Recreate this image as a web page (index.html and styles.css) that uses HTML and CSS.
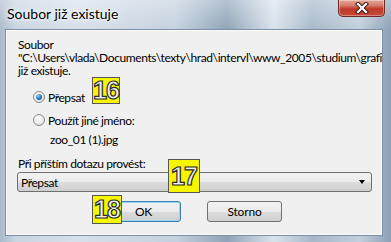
FILE: index.html
```html
<!DOCTYPE html>
<html>
<head>
    <title>Soubor již existuje</title>
    <link rel="stylesheet" href="styles.css">
</head>
<body>
    <div class="window">
        <div class="titlebar">
            <span class="title">Soubor již existuje</span>
            <div class="close">
                <svg width="16" height="12" viewBox="0 0 16 12">
                    <path d="M4 2 L12 10 M12 2 L4 10" stroke="#3a1c18" stroke-width="4.2" stroke-linecap="square"/>
                    <path d="M4 2 L12 10 M12 2 L4 10" stroke="#ffffff" stroke-width="2.2" stroke-linecap="square"/>
                </svg>
            </div>
        </div>
        <div class="client">
            <p class="msg">Soubor<br>"C:\Users\vlada\Documents\texty\hrad\intervl\www_2005\studium\grafika\zoo_01.jpg"<br>již existuje.</p>
            <div class="options">
                <div class="radio checked"><span class="dot"></span>Přepsat</div>
                <div class="radio"><span class="dot"></span>Použít jiné jméno:</div>
                <div class="filename">zoo_01 (1).jpg</div>
            </div>
            <div class="next">Při příštím dotazu provést:</div>
            <div class="select">
                <span>Přepsat</span>
                <span class="arrow"></span>
            </div>
            <div class="buttons">
                <button class="btn default">OK</button>
                <button class="btn">Storno</button>
            </div>
        </div>

        <span class="badge b16">16</span>
        <span class="badge b17">17</span>
        <span class="badge b18">18</span>
    </div>
</body>
</html>
```

FILE: styles.css
```css
body {
    margin: 0;
    font-family: Lato, 'Open Sans', Arial, sans-serif;
    font-size: 12px;
    letter-spacing: -0.4px;
    color: #000;
}

.window {
    position: relative;
    width: 391px;
    height: 242px;
    box-sizing: border-box;
    padding: 0 8px 6px 5px;
    display: flex;
    flex-direction: column;
    overflow: hidden;
    background:
        linear-gradient(180deg, rgba(255,255,255,0.35) 0, rgba(255,255,255,0) 30px),
        linear-gradient(90deg, #a9bacb 0, #c9d5e1 4%, #d7e0ea 20%, #c4d1de 45%, #8fa3b8 58%, #d9e3ec 70%, #a7b8ca 80%, #c2cfdc 92%, #8c9fb4 100%);
}

.titlebar {
    height: 29px;
    display: flex;
    justify-content: space-between;
    align-items: flex-start;
    margin-right: -2px;
}

.title {
    padding-left: 2px;
    line-height: 28px;
    font-size: 14px;
    letter-spacing: 0;
    text-shadow: 0 0 6px #fff, 0 0 3px #fff;
}

.close {
    width: 47px;
    height: 17px;
    box-sizing: border-box;
    border: 1px solid #6b2a24;
    border-top: none;
    border-radius: 0 0 5px 5px;
    background: linear-gradient(180deg, #e4a898 0, #d67a68 35%, #c0392b 55%, #c64a36 100%);
    display: flex;
    justify-content: center;
    align-items: center;
    box-shadow: inset 0 0 0 1px rgba(255,255,255,0.35);
}

.client {
    flex: 1;
    background: #f0f0f0;
    border: 1px solid #7d8fa3;
    box-shadow: inset 0 0 0 1px #fbfbfb;
    padding: 8px 0 0 12px;
    overflow: hidden;
    white-space: nowrap;
}

.msg {
    margin: 0;
    line-height: 13px;
}

.options {
    margin-top: 12px;
    display: flex;
    flex-direction: column;
    gap: 7px;
}

.radio {
    display: flex;
    align-items: center;
    height: 16px;
    padding-left: 15px;
    gap: 3px;
}

.dot {
    width: 12px;
    height: 12px;
    box-sizing: border-box;
    border-radius: 50%;
    border: 1px solid #8a8a8a;
    background: radial-gradient(circle at 40% 35%, #ffffff 0, #f0f0f0 45%, #d2d2d2 100%);
    display: flex;
    justify-content: center;
    align-items: center;
}

.checked .dot::after {
    content: "";
    width: 6px;
    height: 6px;
    border-radius: 50%;
    background: radial-gradient(circle at 35% 30%, #9fd3f5 0, #2a7bc0 50%, #0d3f7a 100%);
}

.filename {
    margin-top: -3px;
    padding-left: 32px;
    line-height: 16px;
}

.next {
    margin-top: 8px;
    line-height: 16px;
}

.select {
    margin-left: -1px;
    width: 355px;
    height: 20px;
    box-sizing: border-box;
    border: 1px solid #707070;
    border-radius: 3px;
    background: linear-gradient(180deg, #f2f2f2 0, #ebebeb 50%, #dddddd 51%, #cfcfcf 100%);
    display: flex;
    align-items: center;
    justify-content: space-between;
    padding: 0 6px 0 3px;
}

.arrow {
    width: 0;
    height: 0;
    border-left: 3.5px solid transparent;
    border-right: 3.5px solid transparent;
    border-top: 4px solid #000;
}

.buttons {
    margin: 9px 0 0 -12px;
    display: flex;
    justify-content: center;
    gap: 26px;
}

.btn {
    width: 75px;
    height: 21px;
    border: 1px solid #707070;
    border-radius: 3px;
    background: linear-gradient(180deg, #f2f2f2 0, #ebebeb 50%, #dddddd 51%, #cfcfcf 100%);
    font-family: Lato, 'Open Sans', Arial, sans-serif;
    font-size: 12px;
    letter-spacing: -0.2px;
    color: #000;
    padding: 0;
}

.btn.default {
    border-color: #3c7fb1;
    box-shadow: inset 0 0 0 1px #9cd4f2;
}

.badge {
    position: absolute;
    background: #f6f600;
    border: 1px solid #555;
    font-family: 'Liberation Sans', Arial, sans-serif;
    font-weight: bold;
    font-size: 25px;
    line-height: 1;
    color: #f2f2f2;
    -webkit-text-stroke: 1.2px #2b2b2b;
    display: flex;
    justify-content: center;
    align-items: center;
    letter-spacing: -1px;
}

.b16 { left: 92px; top: 77px; width: 26px; height: 25px; }
.b17 { left: 168px; top: 159px; width: 30px; height: 32px; }
.b18 { left: 92px; top: 195px; width: 28px; height: 27px; }
```
